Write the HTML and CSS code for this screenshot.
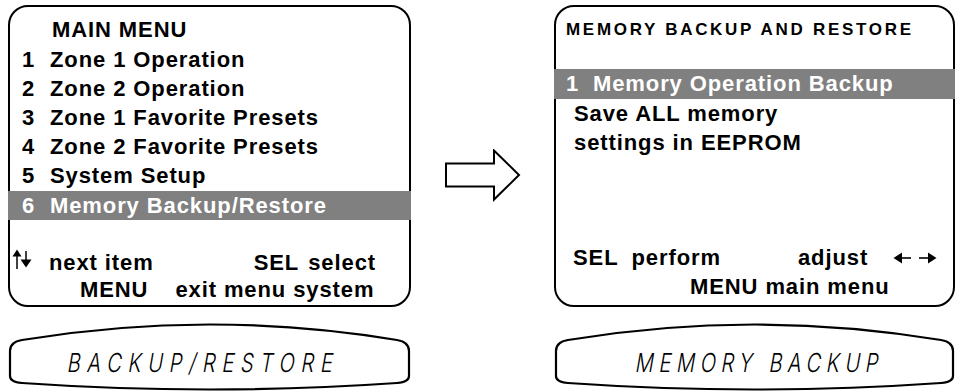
FILE: index.html
```html
<!DOCTYPE html>
<html lang="en">
<head>
    <meta charset="UTF-8">
    <title>Memory Backup and Restore</title>
    <link rel="stylesheet" href="styles.css">
</head>
<body>
    <div class="stage">
        <div class="panel panel-left">
            <div class="osd osd-main">
                <div class="osd-title">MAIN MENU</div>
                <div class="item"><span class="num">1</span>Zone 1 Operation</div>
                <div class="item"><span class="num">2</span>Zone 2 Operation</div>
                <div class="item"><span class="num">3</span>Zone 1 Favorite Presets</div>
                <div class="item"><span class="num">4</span>Zone 2 Favorite Presets</div>
                <div class="item"><span class="num">5</span>System Setup</div>
                <div class="item item-sel"><span class="num">6</span>Memory Backup/Restore</div>
                <div class="foot foot-main">
                    <div class="foot-row">
                        <svg class="updown" width="21" height="21" viewBox="0 0 21 21">
                            <line x1="5" y1="5" x2="5" y2="20" stroke="#000" stroke-width="1.5"/>
                            <polygon points="0.5,7.5 5,0.5 9.5,7.5" fill="#000"/>
                            <line x1="14" y1="2" x2="14" y2="12" stroke="#000" stroke-width="1.5"/>
                            <polygon points="8.5,10.5 19.5,10.5 14,18.5" fill="#000"/>
                        </svg>
                        <span>next item</span>
                        <span class="push">SEL</span>
                        <span class="sp-sel">select</span>
                    </div>
                    <div class="foot-row foot-indent"><span>MENU</span><span class="sp-exit">exit menu system</span></div>
                </div>
            </div>
            <div class="lcd">
                <svg class="lcd-frame" viewBox="0 0 403 70" preserveAspectRatio="none">
                    <path d="M14 18 Q201.5 -13 389 18 Q401 20 401 29 L401 54 Q401 60 389 61 Q201.5 74 14 61 Q2 60 2 54 L2 29 Q2 20 14 18 Z" fill="none" stroke="#000" stroke-width="2.2" vector-effect="non-scaling-stroke"/>
                </svg>
                <div class="lcd-text lcd-left"><span class="lcd-glyphs">BACKUP/RESTORE</span></div>
            </div>
        </div>

        <div class="pointer">
            <svg width="78" height="54" viewBox="0 0 78 54">
                <polygon points="2,14.5 50,14.5 50,1.5 75,26 50,50.5 50,37.5 2,37.5" fill="none" stroke="#000" stroke-width="2"/>
            </svg>
        </div>

        <div class="panel panel-right">
            <div class="osd osd-sub">
                <div class="sub-title">MEMORY BACKUP AND RESTORE</div>
                <div class="item item-sel item-sub"><span class="num">1</span>Memory Operation Backup</div>
                <div class="note">Save ALL memory</div>
                <div class="note">settings in EEPROM</div>
                <div class="foot foot-sub">
                    <div class="foot-row foot-sel">
                        <span>SEL</span>
                        <span class="sp-perform">perform</span>
                        <span class="sp-adjust">adjust</span>
                        <svg class="leftright" width="44" height="14" viewBox="0 0 44 14">
                            <polygon points="0.5,7 9,1.5 9,12.5" fill="#000"/>
                            <line x1="8" y1="7" x2="18" y2="7" stroke="#000" stroke-width="1.6"/>
                            <line x1="26" y1="7" x2="36" y2="7" stroke="#000" stroke-width="1.6"/>
                            <polygon points="43.5,7 35,1.5 35,12.5" fill="#000"/>
                        </svg>
                    </div>
                    <div class="foot-row foot-menu">MENU main menu</div>
                </div>
            </div>
            <div class="lcd">
                <svg class="lcd-frame" viewBox="0 0 403 70" preserveAspectRatio="none">
                    <path d="M14 18 Q201.5 -13 389 18 Q401 20 401 29 L401 54 Q401 60 389 61 Q201.5 74 14 61 Q2 60 2 54 L2 29 Q2 20 14 18 Z" fill="none" stroke="#000" stroke-width="2.2" vector-effect="non-scaling-stroke"/>
                </svg>
                <div class="lcd-text lcd-right"><span class="lcd-glyphs">MEMORY BACKUP</span></div>
            </div>
        </div>
    </div>
</body>
</html>
```

FILE: styles.css
```css
body {
    margin: 0;
    background: #fff;
    color: #000;
    font-family: "Liberation Sans", Arial, sans-serif;
    font-weight: bold;
}

.stage {
    display: flex;
    padding-top: 5px;
}

.panel-left {
    margin-left: 8px;
    width: 403px;
}

.panel-right {
    width: 401px;
}

.pointer {
    width: 143px;
    padding: 144px 0 0 33px;
    box-sizing: border-box;
}

.pointer svg {
    display: block;
}

/* on-screen display boxes */
.osd {
    box-sizing: border-box;
    height: 302px;
    border: 2px solid #000;
    border-radius: 20px;
    display: flex;
    flex-direction: column;
    font-size: 22px;
    letter-spacing: 0.9px;
    white-space: nowrap;
}

.osd-main {
    padding: 8px 0 2px 0;
}

.osd-title {
    padding-left: 42px;
    line-height: 29px;
    margin-bottom: 1px;
}

.item {
    display: flex;
    line-height: 29px;
    padding-left: 12px;
}

.num {
    width: 28px;
}

.item-sel {
    background: #808080;
    color: #fff;
    margin: 1px -2px 0;
    padding-left: 14px;
}

.foot {
    margin-top: auto;
}

.foot-row {
    display: flex;
    align-items: baseline;
}

.foot-main {
    line-height: 27px;
}

.foot-main .foot-row:first-child {
    padding: 0 33px 0 2px;
}

.updown {
    align-self: flex-end;
    margin: 0 16px 6px 0;
}

.push {
    margin-left: auto;
}

.sp-sel {
    margin-left: 9px;
}

.foot-indent {
    padding-left: 70px;
}

.sp-exit {
    margin-left: 27px;
}

/* sub menu */
.osd-sub {
    padding: 13px 0 4px 0;
}

.sub-title {
    font-size: 17px;
    line-height: 20px;
    letter-spacing: 2.7px;
    padding-left: 10px;
    margin-bottom: 29px;
}

.item-sub {
    margin-top: 0;
    line-height: 30px;
    padding-left: 12px;
}

.item-sub .num {
    width: 27px;
}

.note {
    padding-left: 18px;
    line-height: 29px;
}

.foot-sub {
    line-height: 29px;
}

.foot-sel {
    padding-left: 17px;
}

.sp-perform {
    margin-left: 13px;
}

.sp-adjust {
    margin-left: 77px;
}

.leftright {
    align-self: center;
    margin-left: 25px;
}

.foot-menu {
    padding-left: 134px;
}

/* front panel display */
.lcd {
    position: relative;
    height: 70px;
    margin-top: 15px;
}

.lcd-frame {
    position: absolute;
    left: 0;
    top: 0;
    width: 100%;
    height: 100%;
}

.lcd-text {
    position: relative;
    padding-top: 28px;
    font-family: Inter, "Noto Sans", sans-serif;
    font-weight: 300;
    font-size: 26px;
    line-height: 26px;
    white-space: nowrap;
}

.lcd-glyphs {
    display: inline-block;
    transform: skewX(-10deg) scaleX(0.78);
    transform-origin: 0 50%;
}

.lcd-left {
    padding-left: 60px;
    letter-spacing: 8.5px;
}

.lcd-right {
    padding-left: 82px;
    letter-spacing: 7px;
}
```
